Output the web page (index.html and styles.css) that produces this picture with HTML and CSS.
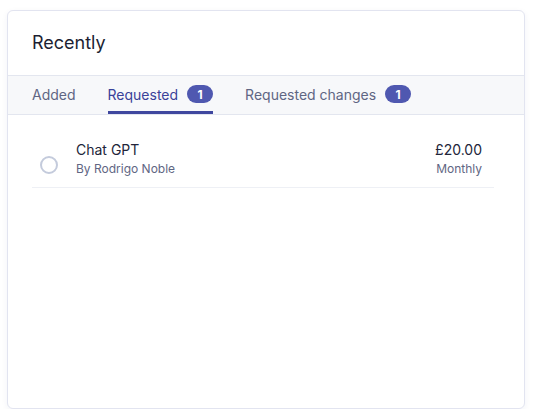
FILE: index.html
```html
<!DOCTYPE html>
<html>
<head>
<meta charset="utf-8">
<link rel="stylesheet" href="styles.css">
</head>
<body>
<div class="card">
  <div class="card-header"><h2 class="title">Recently</h2></div>
  <div class="tabs">
    <div class="tab">Added</div>
    <div class="tab active">Requested <span class="badge">1</span></div>
    <div class="tab">Requested changes <span class="badge">1</span></div>
  </div>
  <div class="list">
    <div class="row">
      <span class="radio"></span>
      <div class="info">
        <div class="name">Chat GPT</div>
        <div class="sub">By Rodrigo Noble</div>
      </div>
      <div class="price">
        <div class="amount">£20.00</div>
        <div class="sub">Monthly</div>
      </div>
    </div>
  </div>
</div>
</body>
</html>
```
FILE: styles.css
```css
* { box-sizing: border-box; }
html, body { margin: 0; padding: 0; background: #ffffff; }
body {
  font-family: Inter, "Noto Sans", sans-serif;
  padding: 10px 8px 0 7px;
  -webkit-font-smoothing: antialiased;
}
.card {
  width: 518px;
  height: 399px;
  border: 1px solid #e2e4f0;
  border-radius: 6px;
  background: #fff;
  box-shadow: 0 2px 6px rgba(40, 50, 120, 0.06);
  overflow: hidden;
}
.card-header {
  height: 64px;
  padding: 0 24px 2px;
  display: flex;
  align-items: center;
}
.title {
  margin: 0;
  font-size: 18px;
  font-weight: 400;
  color: #1c1f33;
}
.tabs {
  height: 40px;
  background: #f7f8fa;
  border-top: 1px solid #e3e6ef;
  border-bottom: 1px solid #e3e6ef;
  display: flex;
  gap: 32px;
  padding: 0 24px;
}
.tab {
  display: flex;
  align-items: center;
  gap: 9px;
  font-size: 14px;
  color: #5f6683;
  height: 38px;
  border-bottom: 3px solid transparent;
  padding-top: 1px;
}
.tab.active {
  color: #3a4299;
  border-bottom-color: #3f479f;
}
.badge {
  display: inline-flex;
  align-items: center;
  justify-content: center;
  width: 26px;
  height: 18px;
  border-radius: 9px;
  background: #4f58b0;
  color: #fff;
  font-size: 12px;
  font-weight: 700;
}
.list {
  padding: 0 30px 0 24px;
}
.row {
  display: flex;
  align-items: center;
  padding: 26px 12px 9px 8px;
  border-bottom: 1px solid #eef0f5;
}
.radio {
  width: 18px;
  height: 18px;
  border: 2px solid #c4cbdc;
  border-radius: 50%;
  margin-right: 18px;
  margin-top: 10px;
  flex: none;
}
.info { flex: 1; }
.name, .amount {
  font-size: 14px;
  color: #22253a;
  line-height: 18px;
}
.sub {
  font-size: 12px;
  color: #5f6683;
  line-height: 18px;
  margin-top: 1px;
}
.price { text-align: right; }
```
